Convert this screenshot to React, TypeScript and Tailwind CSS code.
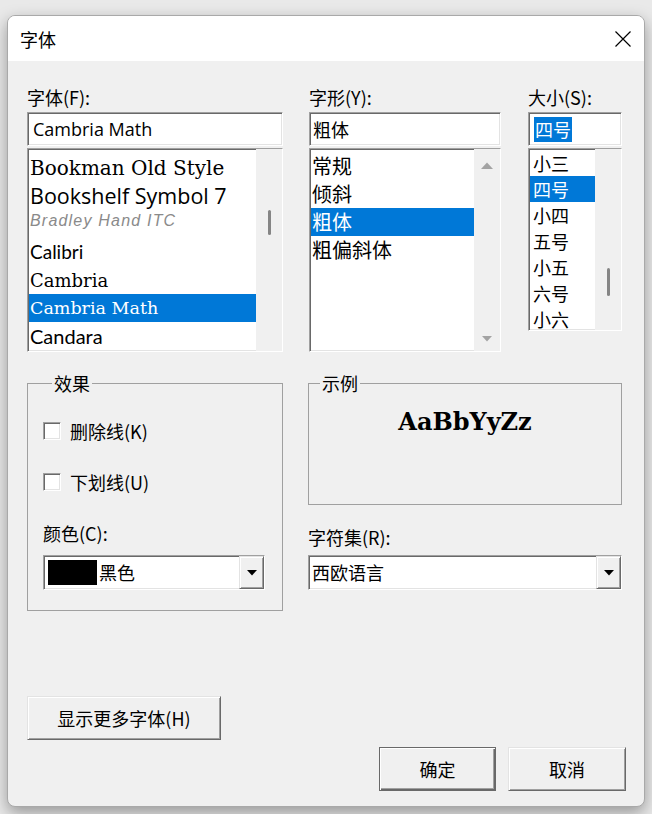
import React from 'react';

const sunken =
  'border border-t-[#a0a0a0] border-l-[#a0a0a0] border-r-white border-b-white shadow-[inset_1px_1px_0_#696969,inset_-1px_-1px_0_#e3e3e3]';
const raised =
  'border border-t-[#e3e3e3] border-l-[#e3e3e3] border-r-[#696969] border-b-[#696969] shadow-[inset_1px_1px_0_#fff,inset_-1px_-1px_0_#a0a0a0] bg-[#f0f0f0]';
const raisedDefault =
  'border border-[#696969] shadow-[inset_1px_1px_0_#fff,inset_-1px_-1px_0_#696969,inset_-2px_-2px_0_#a0a0a0] bg-[#f0f0f0]';

const fontRows = [
  { name: 'Bookman Old Style', cls: "font-['DejaVu_Serif',serif] text-[20px]" },
  { name: 'Bookshelf Symbol 7', cls: "font-['Open_Sans',sans-serif] text-[21.5px]" },
  { name: 'Bradley Hand ITC', cls: "font-['Liberation_Sans',sans-serif] italic text-[16px] tracking-[1.2px] text-[#8a8a8a] -mt-[6px]" },
  { name: 'Calibri', cls: "font-['Lato',sans-serif] text-[19px]" },
  { name: 'Cambria', cls: "font-['DejaVu_Serif',serif] text-[18px]" },
  { name: 'Cambria Math', cls: "font-['DejaVu_Serif',serif] text-[17.5px]", selected: true },
  { name: 'Candara', cls: "font-['Lato',sans-serif] text-[20px]" },
];

const styleRows = [
  { name: '常规' },
  { name: '倾斜' },
  { name: '粗体', selected: true },
  { name: '粗偏斜体' },
];

const sizeRows = [
  { name: '小三' },
  { name: '四号', selected: true },
  { name: '小四' },
  { name: '五号' },
  { name: '小五' },
  { name: '六号' },
  { name: '小六' },
];

function DownArrow({ color = '#000' }: { color?: string }) {
  return (
    <svg width="10" height="6" viewBox="0 0 10 6">
      <polygon points="0,0 10,0 5,5.5" fill={color} />
    </svg>
  );
}

function UpArrow({ color = '#000' }: { color?: string }) {
  return (
    <svg width="12" height="7" viewBox="0 0 12 7">
      <polygon points="0,7 12,7 6,0.5" fill={color} />
    </svg>
  );
}

function Label({ children, className = '' }: { children: React.ReactNode; className?: string }) {
  return <div className={`h-[22px] leading-[22px] text-[18px] whitespace-nowrap ${className}`}>{children}</div>;
}

function Combo({ width, children }: { width: string; children: React.ReactNode }) {
  return (
    <div className={`${sunken} ${width} h-[35px] bg-white flex items-stretch`}>
      <div className="flex-1 flex items-center">{children}</div>
      <div className={`${raised} w-[25px] flex items-center justify-center`}>
        <DownArrow />
      </div>
    </div>
  );
}

function Checkbox({ label }: { label: string }) {
  return (
    <div className="h-[22px] flex items-center gap-[9px]">
      <div className={`${sunken} w-[18px] h-[18px] bg-white`} />
      <span className="text-[18px] leading-[22px]">{label}</span>
    </div>
  );
}

export default function App() {
  return (
    <div className="w-[652px] h-[814px] bg-[#e9e9e9] pt-[15px] pl-[7px] font-['Noto_Sans_CJK_SC',sans-serif] text-black overflow-hidden">
      <div className="w-[638px] h-[792px] rounded-[8px] border border-[#a9a9a9] overflow-hidden flex flex-col bg-[#f0f0f0] shadow-[0_6px_16px_rgba(0,0,0,0.35)]">
        {/* title bar */}
        <div className="h-[45px] bg-white flex items-center justify-between pl-[12px] pr-[13px] shrink-0">
          <span className="text-[18px] leading-[22px]">字体</span>
          <svg width="16" height="16" viewBox="0 0 16 16">
            <path d="M0.5 0.5 L15.5 15.5 M15.5 0.5 L0.5 15.5" stroke="#000" strokeWidth="1.2" fill="none" />
          </svg>
        </div>

        <div className="flex-1 flex flex-col pl-[19px] pt-[25px]">
          {/* top: font / style / size */}
          <div className="flex">
            <div className="w-[256px] flex flex-col">
              <Label className="mb-[4px]">字体(F):</Label>
              <div className={`${sunken} h-[34px] bg-white flex items-center pl-[5px] font-['Open_Sans',sans-serif] text-[18px]`}>
                Cambria Math
              </div>
              <div className={`${sunken} mt-[2px] h-[204px] bg-white flex overflow-hidden`}>
                <div className="flex-1 pt-[5px] pl-[1px] flex flex-col overflow-hidden">
                  {fontRows.map((r) => (
                    <div
                      key={r.name}
                      className={`h-[28px] shrink-0 flex items-center pl-[1px] whitespace-nowrap ${r.selected ? 'bg-[#0078d7] text-white' : ''}`}
                    >
                      <span className={r.cls}>{r.name}</span>
                    </div>
                  ))}
                </div>
                <div className="w-[26px] bg-[#f0f0f0] flex justify-center">
                  <div className="mt-[61px] w-[3px] h-[25px] rounded-full bg-[#858585]" />
                </div>
              </div>
            </div>

            <div className="w-[192px] ml-[26px] flex flex-col">
              <Label className="mb-[4px]">字形(Y):</Label>
              <div className={`${sunken} h-[34px] bg-white flex items-center pl-[3px] text-[18px]`}>粗体</div>
              <div className={`${sunken} mt-[2px] h-[204px] bg-white flex overflow-hidden`}>
                <div className="flex-1 pt-[3px] pl-[1px] flex flex-col">
                  {styleRows.map((r) => (
                    <div
                      key={r.name}
                      className={`h-[28px] flex items-center pl-[1px] text-[20px] whitespace-nowrap ${r.selected ? 'bg-[#0078d7] text-white' : ''}`}
                    >
                      {r.name}
                    </div>
                  ))}
                </div>
                <div className="w-[26px] bg-[#f0f0f0] flex flex-col items-center justify-between pt-[13px] pb-[9px]">
                  <UpArrow color="#a3a3a3" />
                  <DownArrow color="#a3a3a3" />
                </div>
              </div>
            </div>

            <div className="w-[94px] ml-[27px] flex flex-col">
              <Label className="mb-[4px]">大小(S):</Label>
              <div className={`${sunken} h-[34px] bg-white flex items-center pl-[5px]`}>
                <span className="bg-[#0078d7] text-white text-[18px] leading-[25px] px-[1px]">四号</span>
              </div>
              <div className={`${sunken} mt-[2px] h-[183px] bg-white flex overflow-hidden`}>
                <div className="flex-1 pt-[1px] pl-[1px] flex flex-col overflow-hidden">
                  {sizeRows.map((r) => (
                    <div
                      key={r.name}
                      className={`h-[26px] shrink-0 flex items-center pl-[3px] text-[18px] whitespace-nowrap ${r.selected ? 'bg-[#0078d7] text-white' : ''}`}
                    >
                      {r.name}
                    </div>
                  ))}
                </div>
                <div className="w-[26px] bg-[#f0f0f0] flex justify-center">
                  <div className="mt-[119px] w-[3px] h-[28px] rounded-full bg-[#858585]" />
                </div>
              </div>
            </div>
          </div>

          {/* middle: effects / sample */}
          <div className="flex mt-[21px] gap-[25px]">
            <fieldset className="w-[256px] border border-[#a0a0a0] pl-[15px] pb-[20px]">
              <legend className="ml-[9px] px-[2px] text-[18px] leading-[20px]">效果</legend>
              <div className="mt-[27px]">
                <Checkbox label="删除线(K)" />
              </div>
              <div className="mt-[29px]">
                <Checkbox label="下划线(U)" />
              </div>
              <Label className="mt-[29px]">颜色(C):</Label>
              <div className="mt-[11px]">
                <Combo width="w-[222px]">
                  <div className="ml-[4px] w-[49px] h-[25px] bg-black" />
                  <span className="ml-[2px] text-[18px]">黑色</span>
                </Combo>
              </div>
            </fieldset>

            <div className="w-[314px] flex flex-col">
              <fieldset className="h-[132px] border border-[#a0a0a0]">
                <legend className="ml-[11px] px-[2px] text-[18px] leading-[20px]">示例</legend>
                <div className="mt-[14px] h-[30px] leading-[30px] text-center font-['DejaVu_Serif',serif] font-bold text-[24px]">
                  AaBbYyZz
                </div>
              </fieldset>
              <Label className="mt-[21px]">字符集(R):</Label>
              <div className="mt-[7px]">
                <Combo width="w-[314px]">
                  <span className="ml-[3px] text-[18px]">西欧语言</span>
                </Combo>
              </div>
            </div>
          </div>

          {/* bottom buttons */}
          <button className={`${raised} mt-[85px] w-[194px] h-[44px] text-[18px] self-start`}>显示更多字体(H)</button>
          <div className="mt-[7px] flex justify-end gap-[12px] pr-[18px]">
            <button className={`${raisedDefault} w-[117px] h-[44px] text-[18px]`}>确定</button>
            <button className={`${raised} w-[118px] h-[44px] text-[18px]`}>取消</button>
          </div>
        </div>
      </div>
    </div>
  );
}
